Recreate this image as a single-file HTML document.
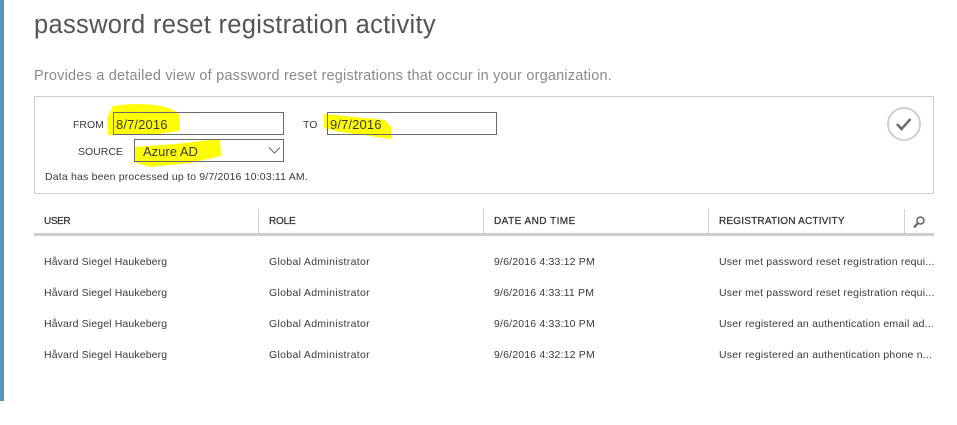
<!DOCTYPE html>
<html>
<head>
<meta charset="utf-8">
<style>
html,body{margin:0;padding:0;background:#fff;}
body{width:957px;height:425px;position:relative;overflow:hidden;font-family:"Liberation Sans",sans-serif;color:#3a3a3a;}
.t{position:absolute;white-space:nowrap;line-height:14px;font-size:10.5px;}
.n{letter-spacing:.13px;}
.r{letter-spacing:.32px;}
.d{letter-spacing:.18px;}
.a{letter-spacing:.2px;width:215px;overflow:hidden;}
.b{position:absolute;box-sizing:border-box;}
.v{position:absolute;top:209px;width:1px;height:25px;background:#d0d0d0;}
.h{font-size:10px;font-weight:normal;color:#333;-webkit-text-stroke:.25px #333;}
</style>
</head>
<body>
<div class="b" style="left:0;top:0;width:4px;height:401px;background:#5199bd;"></div>
<div class="t" style="left:34px;top:9px;font-size:25.5px;line-height:32px;color:#555;letter-spacing:.3px;">password reset registration activity</div>
<div class="t" style="left:34px;top:68px;font-size:14.5px;line-height:16px;color:#8a8a8a;letter-spacing:.2px;">Provides a detailed view of password reset registrations that occur in your organization.</div>

<div class="b" style="left:34px;top:96px;width:900px;height:98px;border:1px solid #cfcfcf;"></div>

<svg class="b" style="left:0;top:0;" width="957" height="425">
<path d="M113 106 C130 103 160 103 173 110 L179 114 L179 131 L150 135 L108 135 L107 118 Z" fill="#ffff00"/>
<path d="M134 147 L175 144 L220 139 L221 156 L190 163 L150 167 L134 162 Z" fill="#ffff00"/>
<path d="M324 114 L345 116 L385 120 L391 127 L391 139 L370 136 L340 132 L324 128 Z" fill="#ffff00"/>
</svg>

<div class="t" style="left:73px;top:118px;font-size:10.5px;">FROM</div>
<div class="b" style="left:113px;top:112px;width:171px;height:23px;border:1px solid #6a6a6a;"></div>
<div class="t" style="left:116px;top:118px;font-size:13px;letter-spacing:.12px;">8/7/2016</div>
<div class="t" style="left:303px;top:118px;font-size:10.5px;">TO</div>
<div class="b" style="left:327px;top:112px;width:170px;height:23px;border:1px solid #6a6a6a;"></div>
<div class="t" style="left:330px;top:118px;font-size:13px;letter-spacing:.12px;">9/7/2016</div>

<div class="t" style="left:78px;top:145px;font-size:10.5px;">SOURCE</div>
<div class="b" style="left:134px;top:139px;width:150px;height:23px;border:1px solid #6a6a6a;"></div>
<div class="t" style="left:143px;top:145px;font-size:13px;">Azure AD</div>
<svg class="b" style="left:268px;top:146px;" width="14" height="9"><path d="M1 1.5 L6.5 7 L12 1.5" fill="none" stroke="#666" stroke-width="1"/></svg>

<div class="t" style="left:45px;top:170px;font-size:10.5px;letter-spacing:.18px;">Data has been processed up to 9/7/2016 10:03:11 AM.</div>

<svg class="b" style="left:886px;top:106px;" width="36" height="36">
<circle cx="18" cy="18" r="16" fill="none" stroke="#cfcfcf" stroke-width="2"/>
<path d="M11 18 L15.5 23 L24.5 13" fill="none" stroke="#6f6f6f" stroke-width="2.6"/>
</svg>

<div class="t h" style="left:44px;top:215px;letter-spacing:-.4px;">USER</div>
<div class="t h" style="left:269px;top:215px;letter-spacing:-.2px;">ROLE</div>
<div class="t h" style="left:494px;top:215px;letter-spacing:.46px;">DATE AND TIME</div>
<div class="t h" style="left:719px;top:215px;letter-spacing:.2px;">REGISTRATION ACTIVITY</div>
<div class="v" style="left:258px;"></div>
<div class="v" style="left:483px;"></div>
<div class="v" style="left:708px;"></div>
<div class="v" style="left:904px;"></div>
<svg class="b" style="left:912px;top:215px;" width="15" height="15">
<circle cx="8.5" cy="5.5" r="3.5" fill="none" stroke="#5f6b73" stroke-width="1.6"/>
<path d="M6 8 L2 12.5" stroke="#5f6b73" stroke-width="2.2" fill="none"/>
</svg>
<div class="b" style="left:34px;top:233px;width:900px;height:3px;background:#cdcdcd;"></div>

<div class="t n" style="left:44px;top:255px;">Håvard Siegel Haukeberg</div>
<div class="t r" style="left:269px;top:255px;">Global Administrator</div>
<div class="t d" style="left:494px;top:255px;">9/6/2016 4:33:12 PM</div>
<div class="t a" style="left:719px;top:255px;">User met password reset registration requi...</div>

<div class="t n" style="left:44px;top:286px;">Håvard Siegel Haukeberg</div>
<div class="t r" style="left:269px;top:286px;">Global Administrator</div>
<div class="t d" style="left:494px;top:286px;">9/6/2016 4:33:11 PM</div>
<div class="t a" style="left:719px;top:286px;">User met password reset registration requi...</div>

<div class="t n" style="left:44px;top:317px;">Håvard Siegel Haukeberg</div>
<div class="t r" style="left:269px;top:317px;">Global Administrator</div>
<div class="t d" style="left:494px;top:317px;">9/6/2016 4:33:10 PM</div>
<div class="t a" style="left:719px;top:317px;">User registered an authentication email ad...</div>

<div class="t n" style="left:44px;top:348px;">Håvard Siegel Haukeberg</div>
<div class="t r" style="left:269px;top:348px;">Global Administrator</div>
<div class="t d" style="left:494px;top:348px;">9/6/2016 4:32:12 PM</div>
<div class="t a" style="left:719px;top:348px;">User registered an authentication phone n...</div>
</body>
</html>
